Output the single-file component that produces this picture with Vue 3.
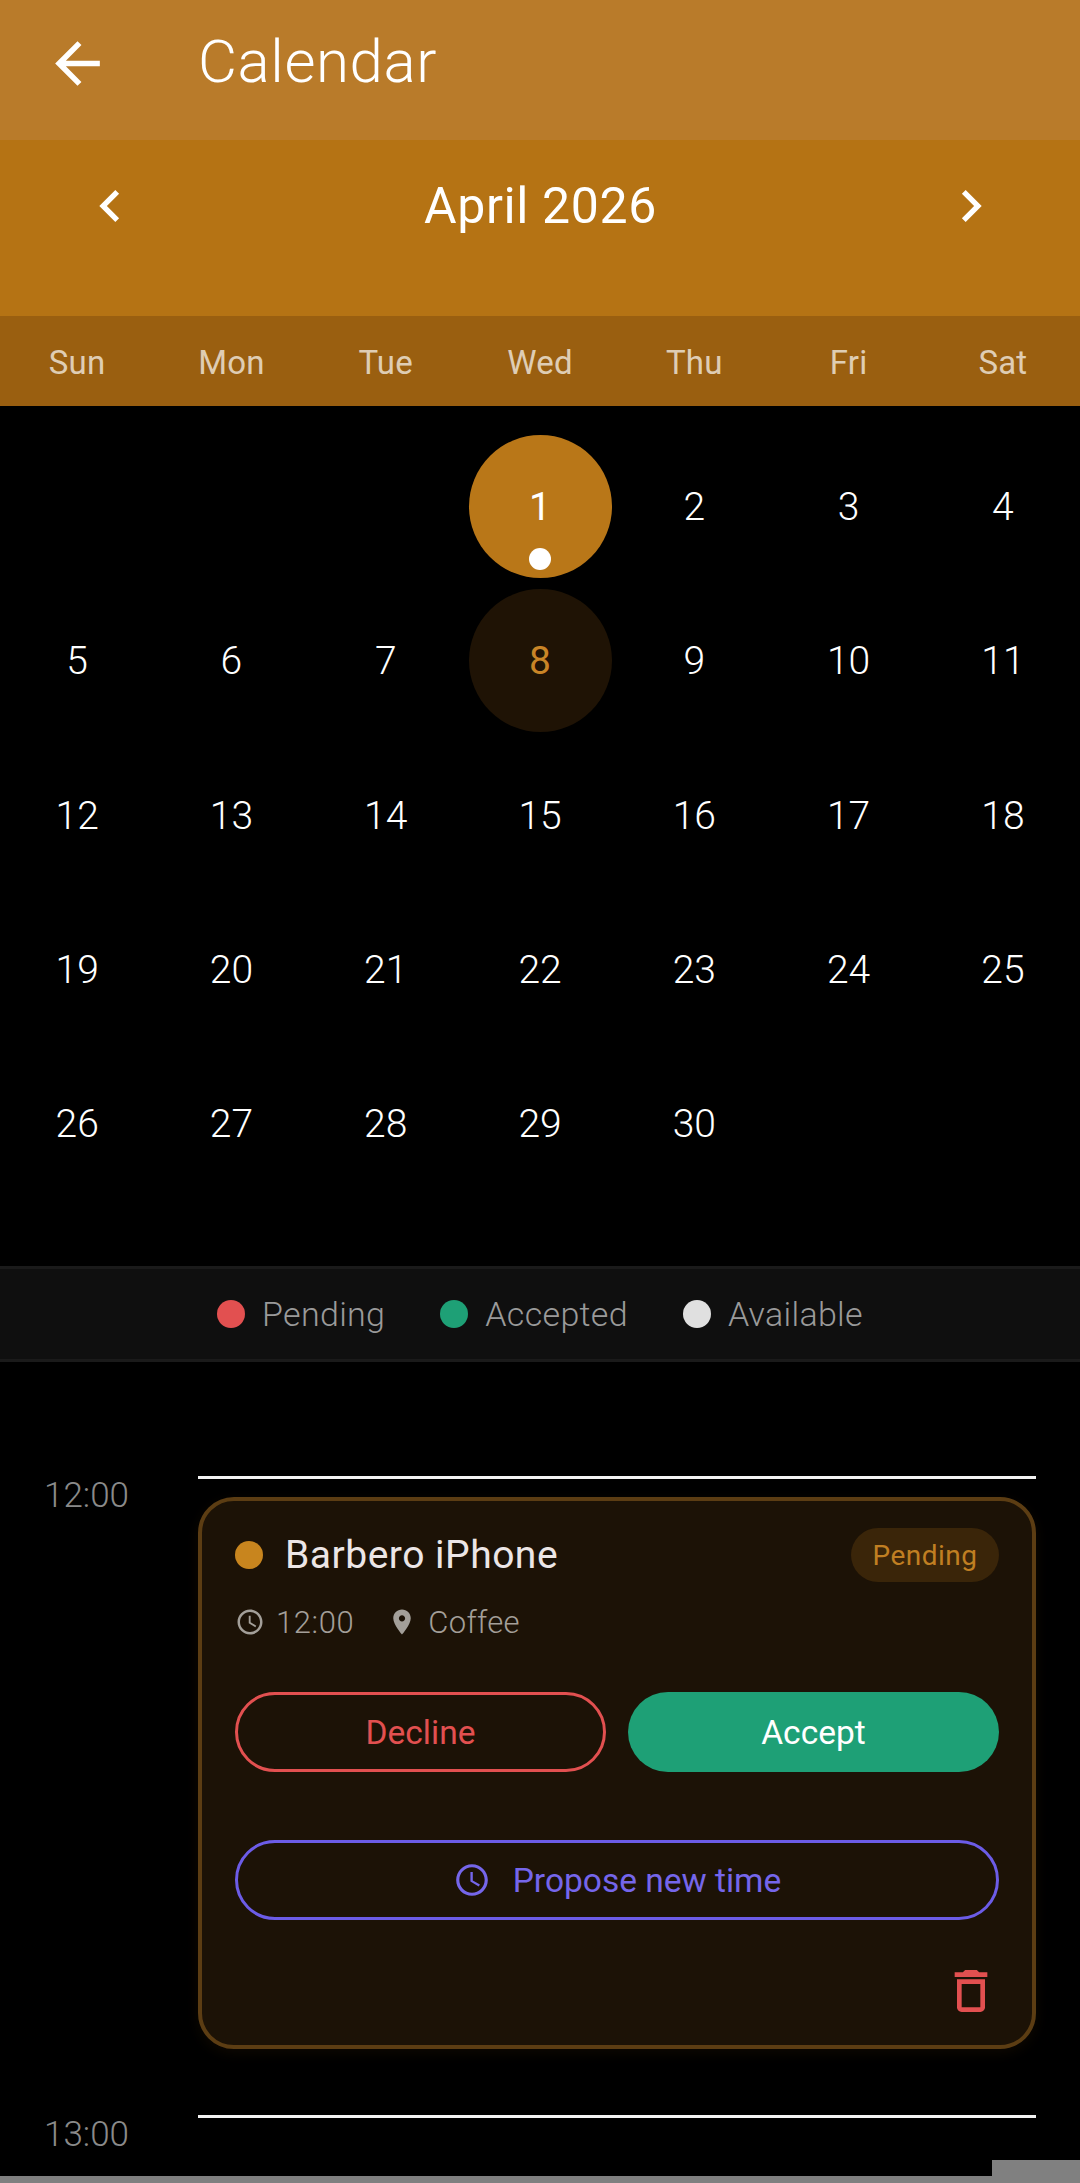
<template>
  <div class="screen">
    <header class="app-bar">
      <svg class="back-icon" viewBox="0 0 24 24" fill="currentColor">
        <path d="M20 11H7.83l5.59-5.59L12 4l-8 8 8 8 1.41-1.41L7.83 13H20v-2z"/>
      </svg>
      <h1 class="app-title">Calendar</h1>
    </header>

    <div class="month-bar">
      <svg class="nav-icon" viewBox="0 0 24 24" fill="currentColor">
        <path d="M15.41 7.41L14 6l-6 6 6 6 1.41-1.41L10.83 12z"/>
      </svg>
      <span class="month-name">April 2026</span>
      <svg class="nav-icon" viewBox="0 0 24 24" fill="currentColor">
        <path d="M8.59 16.59L10 18l6-6-6-6-1.41 1.41L13.17 12z"/>
      </svg>
    </div>

    <div class="week-row">
      <span v-for="d in weekDays" :key="d" class="week-day">{{ d }}</span>
    </div>

    <div class="day-grid">
      <div
        v-for="(d, i) in cells"
        :key="i"
        class="day-cell"
      >
        <div
          v-if="d"
          class="day"
          :class="{ selected: d === 1, today: d === 8 }"
        >
          {{ d }}
          <span v-if="d === 1" class="day-dot"></span>
        </div>
      </div>
    </div>

    <div class="legend">
      <div v-for="l in legend" :key="l.label" class="legend-item">
        <span class="legend-dot" :class="l.kind"></span>
        <span class="legend-label">{{ l.label }}</span>
      </div>
    </div>

    <div class="timeline">
      <div class="slot">
        <span class="slot-time">12:00</span>
        <div class="slot-body">
          <div class="card">
            <div class="card-head">
              <span class="card-dot"></span>
              <span class="card-title">Barbero iPhone</span>
              <span class="badge">Pending</span>
            </div>
            <div class="card-meta">
              <svg class="meta-icon" viewBox="0 0 24 24" fill="currentColor">
                <path d="M11.99 2C6.47 2 2 6.48 2 12s4.47 10 9.99 10C17.52 22 22 17.52 22 12S17.52 2 11.99 2zM12 20c-4.42 0-8-3.58-8-8s3.58-8 8-8 8 3.58 8 8-3.58 8-8 8zm.5-13H11v6l5.25 3.15.75-1.23-4.5-2.67z"/>
              </svg>
              <span class="meta-text">12:00</span>
              <svg class="meta-icon pin" viewBox="0 0 24 24" fill="currentColor">
                <path d="M12 2C8.13 2 5 5.13 5 9c0 5.25 7 13 7 13s7-7.75 7-13c0-3.87-3.13-7-7-7zm0 9.5c-1.38 0-2.5-1.12-2.5-2.5s1.12-2.5 2.5-2.5 2.5 1.12 2.5 2.5-1.12 2.5-2.5 2.5z"/>
              </svg>
              <span class="meta-text place">Coffee</span>
            </div>
            <div class="card-actions">
              <button class="btn decline">Decline</button>
              <button class="btn accept">Accept</button>
            </div>
            <button class="btn propose">
              <svg class="propose-icon" viewBox="0 0 24 24" fill="currentColor">
                <path d="M11.99 2C6.47 2 2 6.48 2 12s4.47 10 9.99 10C17.52 22 22 17.52 22 12S17.52 2 11.99 2zM12 20c-4.42 0-8-3.58-8-8s3.58-8 8-8 8 3.58 8 8-3.58 8-8 8zm.5-13H11v6l5.25 3.15.75-1.23-4.5-2.67z"/>
              </svg>
              Propose new time
            </button>
            <div class="card-foot">
              <svg class="trash-icon" viewBox="0 0 24 24" fill="currentColor">
                <path d="M6 19c0 1.1.9 2 2 2h8c1.1 0 2-.9 2-2V7H6v12zM8 9h8v10H8V9zm7.5-5l-1-1h-5l-1 1H5v2h14V4z"/>
              </svg>
            </div>
          </div>
        </div>
      </div>
      <div class="slot">
        <span class="slot-time">13:00</span>
        <div class="slot-body"></div>
      </div>
    </div>

    <!-- gesture area at the bottom of the capture -->
    <div class="strip-tab"></div>
    <div class="strip"></div>
  </div>
</template>

<script setup>
const weekDays = ['Sun', 'Mon', 'Tue', 'Wed', 'Thu', 'Fri', 'Sat']

// April 2026 starts on a Wednesday
const cells = [null, null, null]
for (let d = 1; d <= 30; d++) cells.push(d)

const legend = [
  { label: 'Pending', kind: 'pending' },
  { label: 'Accepted', kind: 'accepted' },
  { label: 'Available', kind: 'available' }
]
</script>

<style>
body {
  background: #000;
}
</style>

<style scoped>
.screen {
  position: relative;
  width: 1080px;
  height: 2183px;
  overflow: hidden;
  background: #000;
  color: #fff;
  font-family: Roboto, "Noto Sans", sans-serif;
}

.app-bar {
  display: flex;
  align-items: center;
  height: 126px;
  padding: 0 0 14px 44px;
  background: #b97b2a;
}

.back-icon {
  width: 67px;
  height: 67px;
  flex-shrink: 0;
}

.app-title {
  margin: 0 0 3px 87px;
  font-size: 60px;
  font-weight: 300;
  letter-spacing: 0.6px;
  line-height: 1;
}

.month-bar {
  display: flex;
  align-items: center;
  justify-content: space-between;
  height: 176px;
  padding: 0 77px 44px 78px;
  box-sizing: border-box;
  background: #b57314;
}

.nav-icon {
  width: 64px;
  height: 64px;
}

.month-name {
  font-size: 50px;
  font-weight: 400;
  letter-spacing: 0.6px;
}

.week-row {
  display: grid;
  grid-template-columns: repeat(7, 1fr);
  height: 90px;
  padding-top: 2px;
  box-sizing: border-box;
  align-items: center;
  background: #9a5f10;
}

.week-day {
  text-align: center;
  font-size: 33px;
  letter-spacing: 0.2px;
  color: rgba(255, 255, 255, 0.7);
}

.day-grid {
  display: grid;
  grid-template-columns: repeat(7, 1fr);
  padding-top: 23px;
}

.day-cell {
  aspect-ratio: 1;
  display: flex;
  align-items: center;
  justify-content: center;
}

.day {
  position: relative;
  width: 143px;
  height: 143px;
  padding-top: 2px;
  box-sizing: border-box;
  border-radius: 50%;
  display: flex;
  align-items: center;
  justify-content: center;
  font-size: 39px;
  font-weight: 300;
}

.day.selected {
  background: #b97718;
  font-weight: 400;
}

.day.today {
  background: #1f1305;
  color: #c98527;
  font-weight: 400;
}

.day-dot {
  position: absolute;
  left: 50%;
  bottom: 8px;
  width: 22px;
  height: 22px;
  margin-left: -11px;
  border-radius: 50%;
  background: #fff;
}

.legend {
  display: flex;
  justify-content: center;
  gap: 55px;
  height: 96px;
  box-sizing: border-box;
  margin-top: 66px;
  align-items: center;
  background: #0f0f0f;
  border-top: 3px solid #1a1a1a;
  border-bottom: 3px solid #1a1a1a;
}

.legend-item {
  display: flex;
  align-items: center;
  gap: 17px;
}

.legend-dot {
  width: 28px;
  height: 28px;
  border-radius: 50%;
}

.legend-dot.pending {
  background: #e25050;
}

.legend-dot.accepted {
  background: #1ea076;
}

.legend-dot.available {
  background: #e0e0e0;
}

.legend-label {
  font-size: 34px;
  font-weight: 300;
  letter-spacing: 0.3px;
  color: #9a9a9a;
}

.timeline {
  padding: 114px 44px 0 44px;
}

.slot {
  display: grid;
  grid-template-columns: 154px 1fr;
}

.slot-time {
  font-size: 35px;
  font-weight: 300;
  line-height: 38px;
  color: #8a8a8a;
  margin-top: 1px;
}

.slot-body {
  border-top: 3px solid #f2f2f2;
  min-height: 60px;
}

.card {
  margin: 18px 0 66px;
  padding: 27px 33px 33px;
  box-sizing: border-box;
  height: 552px;
  background: #1c1206;
  border: 4px solid #5c3d13;
  border-radius: 36px;
  box-shadow: 0 4px 14px rgba(185, 119, 24, 0.08);
}

.card-head {
  display: flex;
  align-items: center;
  height: 54px;
}

.card-dot {
  width: 28px;
  height: 28px;
  border-radius: 50%;
  background: #c8851e;
  margin-right: 22px;
}

.card-title {
  flex: 1;
  font-size: 39px;
  font-weight: 400;
  letter-spacing: 0.5px;
  color: #ece6e6;
}

.badge {
  height: 54px;
  width: 148px;
  display: flex;
  align-items: center;
  justify-content: center;
  border-radius: 27px;
  background: #3a2509;
  color: #c07f22;
  font-size: 28px;
  letter-spacing: 0.5px;
}

.card-meta {
  display: flex;
  align-items: center;
  margin-top: 25px;
  height: 30px;
  color: #a39f99;
}

.meta-icon {
  width: 30px;
  height: 30px;
  flex-shrink: 0;
}

.meta-icon.pin {
  margin: 0 11px 0 33px;
}

.meta-text {
  margin-left: 11px;
  font-size: 31px;
  font-weight: 300;
  letter-spacing: 0.6px;
}

.meta-text.place {
  margin-left: 0;
  letter-spacing: 0.3px;
}

.card-actions {
  display: grid;
  grid-template-columns: 1fr 1fr;
  gap: 22px;
  margin-top: 55px;
}

.btn {
  height: 80px;
  box-sizing: border-box;
  border-radius: 40px;
  font-family: inherit;
  font-size: 33.5px;
  font-weight: 400;
  background: transparent;
  border: 3px solid transparent;
  display: flex;
  align-items: center;
  justify-content: center;
}

.btn.decline {
  border-color: #e25050;
  color: #e25050;
}

.btn.accept {
  background: #1ea076;
  color: #fff;
}

.btn.propose {
  width: 100%;
  margin-top: 68px;
  border-color: #6c5ce7;
  color: #7566ea;
  gap: 22px;
}

.propose-icon {
  width: 38px;
  height: 38px;
}

.card-foot {
  display: flex;
  justify-content: flex-end;
  margin-top: 43px;
}

.trash-icon {
  width: 56px;
  height: 56px;
  color: #e25050;
}

.strip {
  position: absolute;
  left: 0;
  right: 0;
  bottom: 0;
  height: 7px;
  background: #808080;
}

.strip-tab {
  position: absolute;
  right: 0;
  bottom: 0;
  width: 88px;
  height: 23px;
  background: #808080;
}
</style>
